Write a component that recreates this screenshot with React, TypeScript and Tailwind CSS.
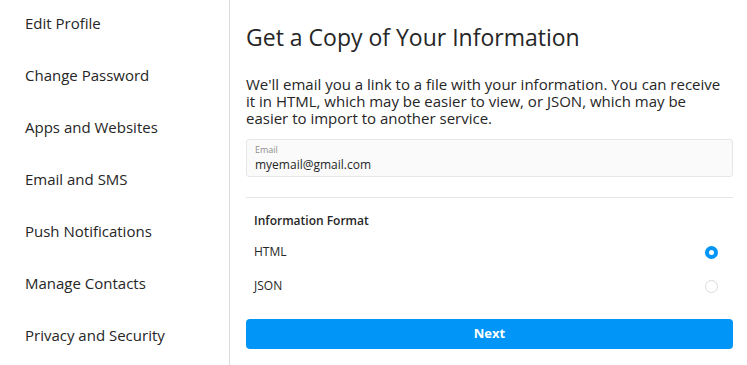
import React from "react";

const menu = [
  "Edit Profile",
  "Change Password",
  "Apps and Websites",
  "Email and SMS",
  "Push Notifications",
  "Manage Contacts",
  "Privacy and Security",
];

function App() {
  return (
    <div
      className="flex h-[365px] w-[747px] overflow-hidden bg-white text-[#262626]"
      style={{ fontFamily: '"Open Sans", "Noto Sans", sans-serif' }}
    >
      <aside className="flex w-[230px] shrink-0 flex-col overflow-hidden border-r border-[#dbdbdb] pt-[12px]">
        {menu.map((item) => (
          <a
            key={item}
            href=""
            className="flex h-[52px] shrink-0 items-start pl-[25px] text-[15px] leading-[22px] text-[#262626]"
          >
            {item}
          </a>
        ))}
      </aside>
      {/* sidebar ends */}
      <main className="flex flex-1 flex-col pl-[16px] pr-[14px] pt-[22px]">
        <h2 className="text-[23px] leading-[30px] text-[#262626]">
          Get a Copy of Your Information
        </h2>
        <p className="mt-[24px] pr-[10px] text-[15px] leading-[17px] text-[#262626]">
          We'll email you a link to a file with your information. You can
          receive it in HTML, which may be easier to view, or JSON, which may be
          easier to import to another service.
        </p>
        <div className="mt-[12px] flex h-[38px] flex-col justify-center rounded-[3px] border border-[#e6e6e6] bg-[#fafafa] px-[8px]">
          <span className="text-[9px] leading-[11px] text-[#8e8e8e]">
            Email
          </span>
          <span className="mt-[2px] text-[12px] leading-[16px] text-[#262626]">
            myemail@gmail.com
          </span>
        </div>
        <div className="mt-[20px] h-px bg-[#e6e6e6]" />
        <div className="flex flex-col px-[8px] pt-[14px]">
          <h3 className="text-[12px] font-semibold leading-[18px] text-[#262626]">
            Information Format
          </h3>
          <label className="mt-[12px] flex h-[20px] items-center justify-between text-[12px]">
            <span>HTML</span>
            <span className="mr-[7px] h-[13px] w-[13px] rounded-full border-[4px] border-[#0095f6] bg-white" />
          </label>
          <label className="mt-[14px] flex h-[20px] items-center justify-between text-[12px]">
            <span>JSON</span>
            <span className="mr-[7px] h-[13px] w-[13px] rounded-full border border-[#dbdbdb] bg-white" />
          </label>
        </div>
        <button className="mt-[23px] h-[30px] w-full rounded-[4px] bg-[#0095f6] text-[13px] font-bold text-white">
          Next
        </button>
      </main>
    </div>
  );
}

export default App;
